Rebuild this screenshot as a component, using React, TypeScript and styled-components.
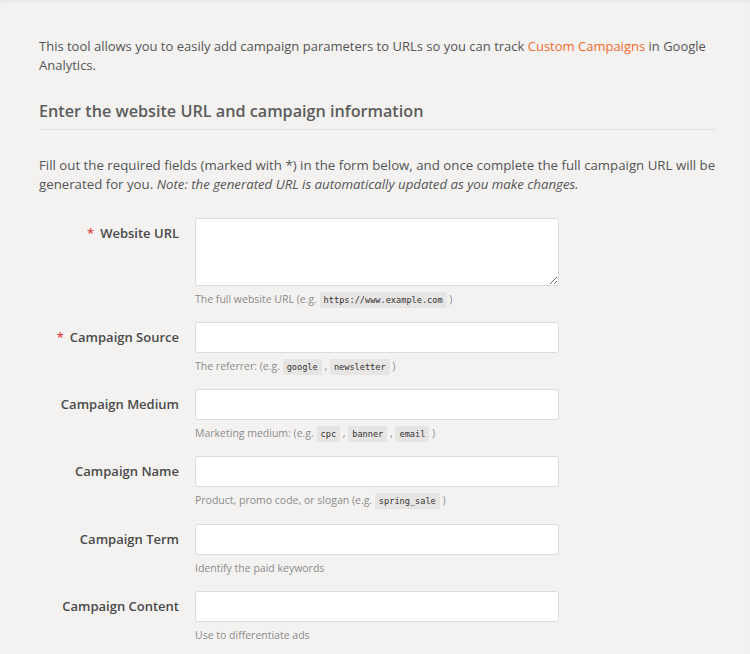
import React from "react";
import styled, { createGlobalStyle } from "styled-components";

const Global = createGlobalStyle`
  html, body { margin: 0; padding: 0; background: #f3f2f1; }
  body { font-family: "Open Sans", "Noto Sans", sans-serif; color: #555; }
  * { box-sizing: border-box; }
`;

const Page = styled.div`
  min-height: 654px;
  padding: 36.5px 35px 0 39px;
  box-shadow: inset 0 3px 4px -2px rgba(0, 0, 0, 0.06);
`;

const Para = styled.p<{ $size?: number; $overhang?: number }>`
  margin: 0 ${(p) => -(p.$overhang ?? 0)}px 0 0;
  font-size: ${(p) => p.$size ?? 13}px;
  line-height: 19px;
  color: #555;
`;

const Link = styled.a`
  color: #f26a2e;
  text-decoration: none;
`;

const Heading = styled.h2`
  margin: 24px 0 26px;
  padding-bottom: 6px;
  border-bottom: 1px solid #e1dfdd;
  font-size: 16.2px;
  line-height: 24px;
  font-weight: 600;
  color: #5c5c5c;
`;

const Form = styled.div`
  margin-top: 24px;
  display: flex;
  flex-direction: column;
  gap: 15.25px;
`;

const Row = styled.div`
  display: grid;
  grid-template-columns: 140px 364px;
  column-gap: 16px;
  align-items: start;
`;

const Label = styled.label`
  text-align: right;
  font-size: 13px;
  font-weight: 600;
  line-height: 30px;
  color: #4a4a4a;
`;

const Star = styled.span`
  color: #e04848;
  margin-right: 6px;
`;

const Field = styled.div`
  display: flex;
  flex-direction: column;
`;

const Input = styled.input`
  height: 31px;
  width: 100%;
  border: 1px solid #dcdcdc;
  border-radius: 3px;
  background: #fff;
  outline: none;
  display: block;
`;

const TextArea = styled.textarea`
  height: 68px;
  width: 100%;
  border: 1px solid #dcdcdc;
  border-radius: 3px;
  background: #fff;
  outline: none;
  display: block;
  margin: 0;
`;

const Help = styled.div`
  margin-top: 6px;
  height: 15px;
  font-size: 10.5px;
  line-height: 15px;
  color: #8c8c8c;
  white-space: nowrap;
`;

const Code = styled.code`
  font-family: "DejaVu Sans Mono", "Liberation Mono", monospace;
  font-size: 8.6px;
  line-height: 1;
  color: #333;
  background: #e6e5e4;
  border-radius: 2px;
  padding: 3px 4px;
`;

type FieldDef = {
  label: string;
  required?: boolean;
  multiline?: boolean;
  help: React.ReactNode;
};

const fields: FieldDef[] = [
  {
    label: "Website URL",
    required: true,
    multiline: true,
    help: (
      <>
        The full website URL (e.g. <Code>https://www.example.com</Code> )
      </>
    ),
  },
  {
    label: "Campaign Source",
    required: true,
    help: (
      <>
        The referrer: (e.g. <Code>google</Code> , <Code>newsletter</Code> )
      </>
    ),
  },
  {
    label: "Campaign Medium",
    help: (
      <>
        Marketing medium: (e.g. <Code>cpc</Code> , <Code>banner</Code> ,{" "}
        <Code>email</Code> )
      </>
    ),
  },
  {
    label: "Campaign Name",
    help: (
      <>
        Product, promo code, or slogan (e.g. <Code>spring_sale</Code> )
      </>
    ),
  },
  { label: "Campaign Term", help: "Identify the paid keywords" },
  { label: "Campaign Content", help: "Use to differentiate ads" },
];

export default function App() {
  return (
    <>
      <Global />
      <Page>
        <Para>
          This tool allows you to easily add campaign parameters to URLs so you
          can track <Link href="#">Custom Campaigns</Link> in Google Analytics.
        </Para>
        <Heading>Enter the website URL and campaign information</Heading>
        <Para $size={13.25} $overhang={10}>
          Fill out the required fields (marked with *) in the form below, and
          once complete the full campaign URL will be generated for you.{" "}
          <em>Note: the generated URL is automatically updated as you make changes.</em>
        </Para>
        <Form>
          {fields.map((f) => (
            <Row key={f.label}>
              <Label>
                {f.required && <Star>*</Star>}
                {f.label}
              </Label>
              <Field>
                {f.multiline ? <TextArea /> : <Input />}
                <Help>{f.help}</Help>
              </Field>
            </Row>
          ))}
        </Form>
      </Page>
    </>
  );
}
